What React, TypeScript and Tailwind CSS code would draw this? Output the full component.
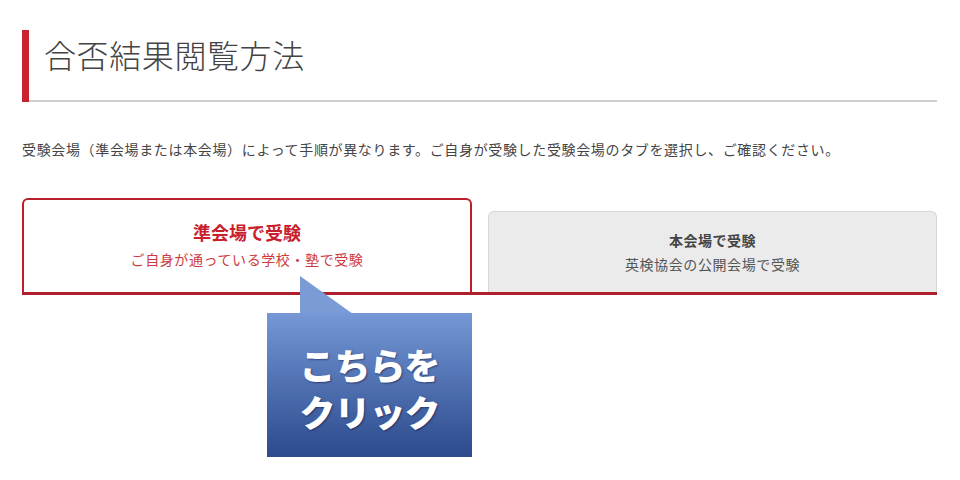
export default function App() {
  const jp = { fontFamily: '"Noto Sans CJK JP", "Noto Sans", sans-serif' }

  return (
    <main className="relative h-[480px] w-[960px] overflow-hidden bg-white pl-[22px] pr-[23px] pt-[30px]" style={jp}>
      {/* page heading */}
      <div className="flex h-[72px]">
        <div className="w-[7px] bg-[#c8232c]" />
        <div className="flex-1 border-b-2 border-[#cfcfcf] pl-[15px] pt-[8px]">
          <h1 className="text-[32px] font-light leading-[32px] tracking-[0.6px] text-[#444]">合否結果閲覧方法</h1>
        </div>
      </div>

      <p className="mt-[37px] text-[14px] leading-[20px] tracking-[0.65px] text-[#444]">
        受験会場（準会場または本会場）によって手順が異なります。ご自身が受験した受験会場のタブを選択し、ご確認ください。
      </p>

      {/* venue tabs */}
      <div className="mt-[39px] flex items-end gap-[16px] border-b-[3px] border-[#ae1f2b]">
        <button className="flex h-[94px] w-[450px] flex-col items-center justify-center rounded-t-[6px] border-2 border-b-0 border-[#b8202c] bg-white">
          <span className="text-[18px] font-bold leading-[26px] text-[#c8202c]">準会場で受験</span>
          <span className="text-[14px] leading-[28px] tracking-[0.6px] text-[#cc3a3f]">ご自身が通っている学校・塾で受験</span>
        </button>
        <button className="flex h-[81px] flex-1 flex-col items-center justify-center rounded-t-[6px] border border-b-0 border-[#d6d6d6] bg-[#ebebeb]">
          <span className="text-[14px] font-bold leading-[24px] tracking-[0.5px] text-[#444]">本会場で受験</span>
          <span className="text-[14px] leading-[24px] tracking-[0.6px] text-[#555]">英検協会の公開会場で受験</span>
        </button>
      </div>

      {/* callout */}
      <svg className="absolute left-[300px] top-[276px]" width="53" height="38" viewBox="0 0 53 38">
        <polygon points="0,0 0,38 53,38" fill="#7b9bd7" />
      </svg>
      <div className="absolute left-[267px] top-[313px] flex h-[144px] w-[205px] flex-col items-center justify-center bg-gradient-to-b from-[#7698d6] to-[#2c4a8c] pt-[6px]">
        <span className="text-[36px] font-black leading-[47px] tracking-[-1px] text-white [text-shadow:1px_1px_2px_rgba(0,0,40,0.45)]">こちらを</span>
        <span className="text-[36px] font-black leading-[47px] tracking-[-1px] text-white [text-shadow:1px_1px_2px_rgba(0,0,40,0.45)]">クリック</span>
      </div>
    </main>
  )
}
